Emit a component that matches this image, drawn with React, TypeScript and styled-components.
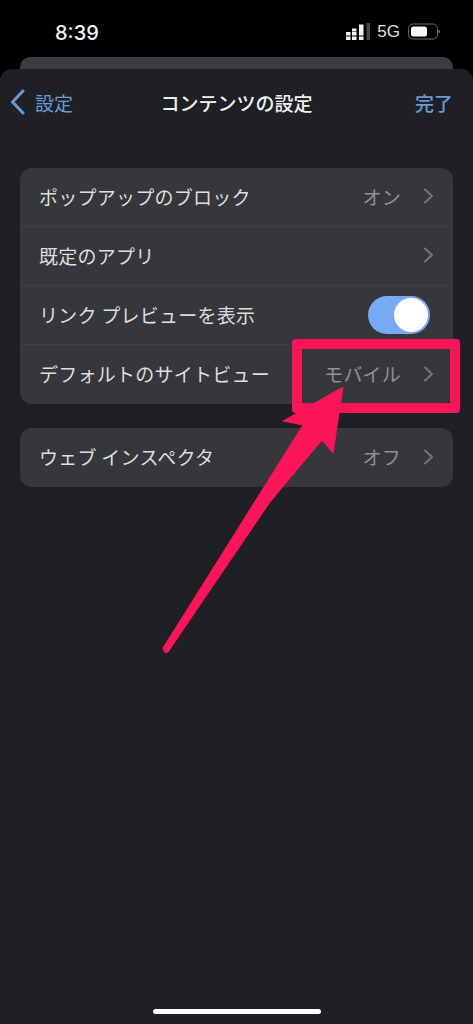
import React from 'react';
import styled, { createGlobalStyle } from 'styled-components';

const GlobalStyle = createGlobalStyle`
  html, body {
    margin: 0;
    padding: 0;
    background: #000;
  }
  body {
    font-family: "Liberation Sans", "Noto Sans CJK JP", sans-serif;
  }
`;

const Screen = styled.div`
  position: relative;
  width: 473px;
  height: 1024px;
  overflow: hidden;
  background: #000;
  display: flex;
  flex-direction: column;
`;

const StatusBar = styled.div`
  height: 57px;
  flex-shrink: 0;
  display: flex;
  align-items: center;
  justify-content: space-between;
  padding: 6px 33px 0 55px;
  box-sizing: border-box;
  color: #f2f2f2;
`;

const Clock = styled.span`
  font-family: "Inter", "Liberation Sans", sans-serif;
  font-size: 20px;
  font-weight: 500;
  padding-top: 2px;
`;

const StatusIcons = styled.div`
  display: flex;
  align-items: center;
  gap: 8px;
`;

const NetworkLabel = styled.span`
  font-size: 17px;
  color: #e2e2e2;
  margin-left: -2px;
`;

const BackSheet = styled.div`
  height: 12px;
  margin: 0 20px;
  flex-shrink: 0;
  background: #3a3c40;
  border-radius: 10px 10px 0 0;
`;

const Sheet = styled.div`
  flex: 1;
  background: #1f2023;
  border-radius: 12px 12px 0 0;
  display: flex;
  flex-direction: column;
`;

const NavBar = styled.div`
  position: relative;
  height: 68px;
  display: flex;
  align-items: center;
  justify-content: space-between;
  padding: 0 20px 2px 10px;
  box-sizing: border-box;
`;

const NavTitle = styled.div`
  position: absolute;
  left: 0;
  right: 0;
  text-align: center;
  color: #f0f0f0;
  font-size: 19px;
  font-weight: 500;
  font-family: "Noto Sans CJK JP", sans-serif;
`;

const BackLink = styled.div`
  display: flex;
  align-items: center;
  gap: 10px;
  color: #6a9ad6;
  font-size: 19px;
  font-family: "Noto Sans CJK JP", sans-serif;
`;

const DoneLink = styled.div`
  color: #6a9ad6;
  font-size: 19px;
  font-weight: 500;
  font-family: "Noto Sans CJK JP", sans-serif;
`;

const Content = styled.div`
  padding: 31px 20px 0;
  display: flex;
  flex-direction: column;
  gap: 24px;
`;

const Group = styled.div`
  background: #35373a;
  border-radius: 12px;
  overflow: hidden;
`;

const Row = styled.div<{ $divider?: boolean }>`
  position: relative;
  height: 59px;
  box-sizing: border-box;
  display: flex;
  align-items: center;
  justify-content: space-between;
  padding: 0 20px 2px 19px;
  border-bottom: ${({ $divider }) => ($divider ? '1px solid #3e4044' : 'none')};
`;

const RowLabel = styled.span`
  color: #dedede;
  font-size: 19px;
  letter-spacing: 0.25px;
  font-family: "Noto Sans CJK JP", sans-serif;
`;

const RowValue = styled.div`
  display: flex;
  align-items: center;
  gap: 23px;
  color: #8e9092;
  font-size: 19px;
  letter-spacing: 0.2px;
  font-family: "Noto Sans CJK JP", sans-serif;
`;

const Toggle = styled.div`
  width: 62px;
  height: 38px;
  margin: 2px 3px 0 0;
  border-radius: 19px;
  background: #78a9f3;
  display: flex;
  justify-content: flex-end;
  align-items: center;
  padding: 2px;
  box-sizing: border-box;
`;

const ToggleKnob = styled.div`
  width: 34px;
  height: 34px;
  border-radius: 50%;
  background: #fff;
`;

const Highlight = styled.div`
  position: absolute;
  left: 292px;
  top: 339px;
  width: 168px;
  height: 74px;
  box-sizing: border-box;
  border: 10px solid #fb1558;
  border-radius: 4px;
`;

const ArrowMark = styled.svg`
  position: absolute;
  left: 0;
  top: 0;
  width: 473px;
  height: 1024px;
  pointer-events: none;
`;

const HomeBar = styled.div`
  position: absolute;
  left: 153px;
  bottom: 10px;
  width: 168px;
  height: 5px;
  border-radius: 3px;
  background: #fff;
`;

const Chevron = () => (
  <svg width="9" height="16" viewBox="0 0 9 16" fill="none">
    <path d="M1 1.5 L8 8 L1 14.5" stroke="#727477" strokeWidth="2" strokeLinecap="round" strokeLinejoin="round" />
  </svg>
);

const BackChevron = () => (
  <svg width="15" height="26" viewBox="0 0 15 26" fill="none">
    <path d="M13 2 L2.5 13 L13 24" stroke="#6a9ad6" strokeWidth="3" strokeLinecap="round" strokeLinejoin="round" />
  </svg>
);

const SignalBars = () => (
  <svg width="25" height="17" viewBox="0 0 25 17">
    <rect x="0" y="9" width="4.5" height="3.5" fill="#f2f2f2" />
    <rect x="0" y="13.5" width="4.5" height="3.5" fill="#f2f2f2" />
    <rect x="6" y="5.5" width="4.5" height="3" fill="#f2f2f2" />
    <rect x="6" y="9" width="4.5" height="3.5" fill="#f2f2f2" />
    <rect x="6" y="13.5" width="4.5" height="3.5" fill="#f2f2f2" />
    <rect x="13" y="1.5" width="4.5" height="11" fill="#f2f2f2" />
    <rect x="13" y="13.5" width="4.5" height="3.5" fill="#f2f2f2" />
    <rect x="20.5" y="0" width="3.5" height="17" fill="#4a4a4a" />
  </svg>
);

const Battery = () => (
  <svg width="32" height="17" viewBox="0 0 32 17" fill="none">
    <rect x="0.5" y="1" width="29" height="15" rx="4.5" stroke="#6a6a6a" />
    <rect x="3" y="3.5" width="16" height="10" rx="2.5" fill="#f5f5f5" />
    <path d="M30.5 6.5 v4 c0.8 -0.3 1.5 -1 1.5 -2 s-0.7 -1.7 -1.5 -2z" fill="#6a6a6a" />
  </svg>
);

const App: React.FC = () => (
  <Screen>
    <GlobalStyle />
    <StatusBar>
      <Clock>8:39</Clock>
      <StatusIcons>
        <SignalBars />
        <NetworkLabel>5G</NetworkLabel>
        <Battery />
      </StatusIcons>
    </StatusBar>
    <BackSheet />
    <Sheet>
      <NavBar>
        <NavTitle>コンテンツの設定</NavTitle>
        <BackLink>
          <BackChevron />
          設定
        </BackLink>
        <DoneLink>完了</DoneLink>
      </NavBar>
      <Content>
        <Group>
          <Row $divider>
            <RowLabel>ポップアップのブロック</RowLabel>
            <RowValue>
              オン
              <Chevron />
            </RowValue>
          </Row>
          <Row $divider>
            <RowLabel>既定のアプリ</RowLabel>
            <RowValue>
              <Chevron />
            </RowValue>
          </Row>
          <Row $divider>
            <RowLabel>リンク プレビューを表示</RowLabel>
            <Toggle>
              <ToggleKnob />
            </Toggle>
          </Row>
          <Row>
            <RowLabel>デフォルトのサイトビュー</RowLabel>
            <RowValue>
              モバイル
              <Chevron />
            </RowValue>
          </Row>
        </Group>
        <Group>
          <Row>
            <RowLabel>ウェブ インスペクタ</RowLabel>
            <RowValue>
              オフ
              <Chevron />
            </RowValue>
          </Row>
        </Group>
      </Content>
    </Sheet>
    <Highlight />
    <ArrowMark viewBox="0 0 473 1024">
      <path
        d="M343 387 L333 453 L322 440 L270 502 L168 652 Q164 654 163 648 L303 425 L283 421 Z"
        fill="#fb1558"
        stroke="#fb1558"
        strokeWidth="1"
        strokeLinejoin="round"
      />
    </ArrowMark>
    <HomeBar />
  </Screen>
);

export default App;
